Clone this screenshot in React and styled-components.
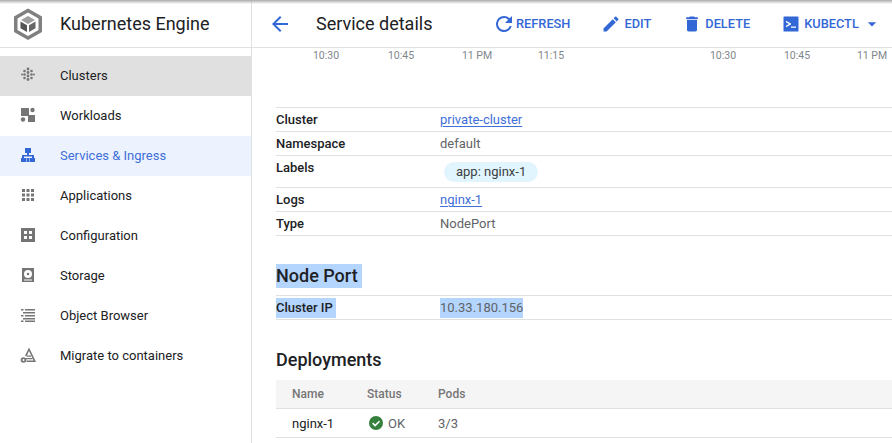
import React from "react";
import styled, { createGlobalStyle } from "styled-components";

const Global = createGlobalStyle`
  html, body {
    margin: 0;
    padding: 0;
    height: 100%;
    background: #fff;
    overflow: hidden;
  }
  body {
    font-family: Roboto, "Liberation Sans", sans-serif;
    color: #202124;
  }
`;

const Page = styled.div`
  position: relative;
  display: flex;
  width: 892px;
  height: 443px;
  overflow: hidden;
`;

const TopShade = styled.div`
  position: absolute;
  top: 0;
  left: 0;
  right: 0;
  height: 4px;
  background: linear-gradient(#aaaaaa, #ffffff00);
`;

const Sidebar = styled.aside`
  flex: 0 0 251px;
  border-right: 1px solid #e0e0e0;
`;

const Brand = styled.div`
  display: flex;
  align-items: center;
  gap: 17px;
  height: 47px;
  padding-left: 13px;
  border-bottom: 1px solid #e0e0e0;
  margin-bottom: 8px;
  font-size: 18px;
  color: #202124;
`;

const NavRow = styled.div`
  display: flex;
  align-items: center;
  height: 38px;
  padding: 0 0 2px 17px;
  gap: 21px;
  font-size: 13px;
  color: ${(p) => (p.$active ? "#3f6fd8" : "#202124")};
  background: ${(p) => (p.$active ? "#edf3fe" : p.$current ? "#e0e0e0" : "transparent")};
`;

const NavIcon = styled.svg`
  width: 22px;
  height: 22px;
  flex: none;
  fill: ${(p) => (p.$active ? "#3367d6" : "#757575")};
`;

const Main = styled.main`
  flex: 1;
  min-width: 0;
`;

const Toolbar = styled.header`
  display: flex;
  align-items: center;
  height: 47px;
  padding-left: 16px;
  border-bottom: 1px solid #e0e0e0;
`;

const BackIcon = styled.svg`
  flex: none;
  width: 24px;
  height: 24px;
  fill: #3367d6;
  margin-right: 24px;
`;

const Title = styled.h1`
  margin: 0;
  flex: 0 0 176px;
  font-size: 18px;
  font-weight: 400;
`;

const Actions = styled.div`
  display: flex;
  align-items: center;
  gap: 31px;
  flex: none;
`;

const Action = styled.div`
  display: flex;
  align-items: center;
  gap: ${(p) => p.$gap ?? 3}px;
  font-size: 12.8px;
  font-weight: 500;
  color: #3367d6;
`;

const ActionIcon = styled.svg`
  flex: none;
  width: ${(p) => p.$size || 20}px;
  height: ${(p) => p.$size || 20}px;
  fill: #3367d6;
`;

const Axis = styled.div`
  position: relative;
  height: 59px;
`;

const Tick = styled.span`
  position: absolute;
  top: 1px;
  left: ${(p) => p.$left}px;
  transform: translateX(-50%);
  white-space: nowrap;
  font-size: 10.5px;
  color: #80868b;
`;

const Content = styled.div`
  padding-left: 24px;
`;

const Rows = styled.div`
  border-top: 1px solid #e0e0e0;
`;

const Row = styled.div`
  display: flex;
  min-height: ${(p) => p.$height || 23}px;
  border-bottom: 1px solid #e0e0e0;
  font-size: 13px;
  line-height: 23px;
`;

const Key = styled.div`
  flex: 0 0 164px;
  font-weight: 500;
  color: #202124;
`;

const Value = styled.div`
  color: #5f6368;
`;

const Link = styled.a`
  color: #3f6fd8;
  text-decoration: underline;
  text-underline-offset: 2px;
`;

const Chip = styled.span`
  display: inline-block;
  vertical-align: top;
  margin: 6px 0 0 4px;
  padding: 0 12px;
  height: 20px;
  line-height: 20px;
  border-radius: 10px;
  background: #e1f5fe;
  color: #3c4043;
`;

const SectionTitle = styled.h2`
  margin: ${(p) => p.$top}px 0 ${(p) => p.$bottom}px;
  font-size: 18px;
  line-height: 24px;
  font-weight: 500;
  color: #202124;
`;

const Selected = styled.span`
  display: inline-block;
  padding-right: ${(p) => p.$pad || 0}px;
  background: #b4d5fe;
`;

const SelectedCell = styled(Selected)`
  vertical-align: top;
  margin-top: 2px;
  line-height: 20px;
`;

const TableHead = styled.div`
  display: flex;
  align-items: center;
  height: 28px;
  padding-left: 16px;
  background: #f5f5f5;
  border-bottom: 1px solid #e0e0e0;
  font-size: 12px;
  font-weight: 500;
  color: #757575;
`;

const TableRow = styled.div`
  display: flex;
  align-items: center;
  height: 28px;
  padding-left: 16px;
  border-bottom: 1px solid #e0e0e0;
  font-size: 13px;
  color: #5f6368;
`;

const Cell = styled.div`
  flex: 0 0 ${(p) => p.$width}px;
  display: flex;
  align-items: center;
  gap: 5px;
  color: ${(p) => (p.$dark ? "#202124" : "inherit")};
`;

const OkIcon = styled.svg`
  width: 14px;
  height: 14px;
  margin-left: 2px;
`;

const Hexagon = () => (
  <svg width="30" height="32" viewBox="0 0 30 32">
    <path
      fill="#808080"
      fillRule="evenodd"
      d="M15 0.5 29 8.500V24L15 32 1 24V8.500ZM15 4.500 4.500 10.500V22L15 28 25.500 22V10.500Z"
    />
    <path fill="#9e9e9e" d="M15 8 22 12 15 16 8 12Z" />
    <path fill="#555" d="M7.500 13.500 14 17.200V24L7.500 20.300Z" />
    <path fill="#666" d="M22.500 13.500V20.300L16 24V17.200Z" />
  </svg>
);

const navItems = [
  {
    label: "Clusters",
    current: true,
    icon: (
      <>
        <circle cx="11" cy="5" r="1.400" />
        <circle cx="11" cy="8.500" r="1.400" />
        <circle cx="11" cy="12" r="1.400" />
        <circle cx="11" cy="15.500" r="1.400" />
        <circle cx="7.500" cy="7" r="1.300" />
        <circle cx="14.500" cy="7" r="1.300" />
        <circle cx="7.500" cy="10.500" r="1.300" />
        <circle cx="14.500" cy="10.500" r="1.300" />
        <circle cx="7.500" cy="14" r="1.300" />
        <circle cx="14.500" cy="14" r="1.300" />
        <circle cx="5" cy="10.500" r="1" />
        <circle cx="17" cy="10.500" r="1" />
      </>
    ),
  },
  {
    label: "Workloads",
    icon: (
      <>
        <rect x="4" y="4" width="8" height="8" />
        <circle cx="15.500" cy="6" r="2.200" />
        <circle cx="6" cy="15.500" r="2.200" />
        <rect x="11" y="11" width="7" height="7" />
      </>
    ),
  },
  {
    label: "Services & Ingress",
    active: true,
    icon: (
      <path d="M8 4h6v5h-2v2h5v3h1v4h-5v-4h2v-1.500h-8V14h2v4H4v-4h1v-3h5V9H8ZM9.500 14h3v4h-3Z" />
    ),
  },
  {
    label: "Applications",
    icon: (
      <>
        {[5, 9.5, 14].map((y) =>
          [5, 9.5, 14].map((x) => <rect key={`${x}-${y}`} x={x} y={y} width="3" height="3" />)
        )}
      </>
    ),
  },
  {
    label: "Configuration",
    icon: (
      <path
        fillRule="evenodd"
        d="M4 4h14v14H4ZM7 7v3h3V7ZM12 7v3h3V7ZM7 12v3h3v-3ZM12 12v3h3v-3Z"
      />
    ),
  },
  {
    label: "Storage",
    icon: (
      <path
        fillRule="evenodd"
        d="M5 4h12v14H5ZM11 6a4 4 0 1 0 0 8 4 4 0 0 0 0-8ZM11 8.700a1.300 1.300 0 1 1 0 2.600 1.300 1.300 0 0 1 0-2.600ZM7 15.500v1h8v-1Z"
      />
    ),
  },
  {
    label: "Object Browser",
    icon: (
      <path d="M8 5h10v1.500H8ZM4 5h2.500v1.500H4ZM6 8h12v1.500H6ZM4 11h2.500v1.500H4ZM8 11h10v1.500H8ZM6 14h12v1.500H6ZM4 16.500h2.500V18H4ZM8 16.500h10V18H8Z" />
    ),
  },
  {
    label: "Migrate to containers",
    icon: (
      <>
        <path fillRule="evenodd" d="M12 3.500 19 18H9.500v-1.500h7L12 7 9.500 12.500 8 11.800Z" />
        <path d="M10 11.500h4v1.300h-4ZM9 14h6.500v1.300H9Z" />
        <circle cx="6.500" cy="16" r="2.800" />
        <circle cx="6.500" cy="16" r="1" fill="#fff" />
      </>
    ),
  },
];

const ticks = [
  ["10:30", 74],
  ["10:45", 149],
  ["11 PM", 225],
  ["11:15", 299],
  ["10:30", 471],
  ["10:45", 545],
  ["11 PM", 620],
];

const App = () => {
  return (
    <Page>
      <Global />
      <TopShade />
      <Sidebar>
        <Brand>
          <Hexagon />
          Kubernetes Engine
        </Brand>
        {navItems.map((item) => (
          <NavRow key={item.label} $active={item.active} $current={item.current}>
            <NavIcon viewBox="0 0 22 22" $active={item.active}>
              {item.icon}
            </NavIcon>
            {item.label}
          </NavRow>
        ))}
      </Sidebar>
      <Main>
        <Toolbar>
          <BackIcon viewBox="0 0 24 24">
            <path d="M20 11H7.830l5.590-5.590L12 4l-8 8 8 8 1.410-1.410L7.830 13H20z" />
          </BackIcon>
          <Title>Service details</Title>
          <Actions>
            <Action $gap={0}>
              <ActionIcon viewBox="0 0 24 24" $size={24}>
                <path d="M17.650 6.350A7.950 7.950 0 0 0 12 4a8 8 0 1 0 7.740 10h-2.080A6 6 0 1 1 12 6c1.660 0 3.140.69 4.220 1.780L13 11h7V4z" />
              </ActionIcon>
              REFRESH
            </Action>
            <Action>
              <ActionIcon viewBox="0 0 24 24">
                <path d="M3 17.250V21h3.750L17.810 9.940l-3.750-3.750zM20.710 7.040a1 1 0 0 0 0-1.410l-2.340-2.340a1 1 0 0 0-1.410 0l-1.830 1.830 3.750 3.750z" />
              </ActionIcon>
              EDIT
            </Action>
            <Action>
              <ActionIcon viewBox="0 0 24 24">
                <path d="M6 19c0 1.100.9 2 2 2h8c1.100 0 2-.9 2-2V7H6zM19 4h-3.500l-1-1h-5l-1 1H5v2h14z" />
              </ActionIcon>
              DELETE
            </Action>
            <Action>
              <ActionIcon viewBox="0 0 24 24">
                <path
                  fillRule="evenodd"
                  d="M4 3h16a1 1 0 0 1 1 1v16a1 1 0 0 1-1 1H4a1 1 0 0 1-1-1V4a1 1 0 0 1 1-1ZM6 8v2l3.500 2L6 14v2l6-3.300v-1.400ZM12 15v1.500h6V15Z"
                />
              </ActionIcon>
              KUBECTL
              <ActionIcon viewBox="0 0 24 24">
                <path d="M7 10l5 5 5-5z" />
              </ActionIcon>
            </Action>
          </Actions>
        </Toolbar>
        <Axis>
          {ticks.map(([label, left]) => (
            <Tick key={`${label}-${left}`} $left={left}>
              {label}
            </Tick>
          ))}
        </Axis>
        <Content>
          <Rows>
            <Row>
              <Key>Cluster</Key>
              <Value>
                <Link>private-cluster</Link>
              </Value>
            </Row>
            <Row>
              <Key>Namespace</Key>
              <Value>default</Value>
            </Row>
            <Row $height={31}>
              <Key>Labels</Key>
              <Value>
                <Chip>app: nginx-1</Chip>
              </Value>
            </Row>
            <Row>
              <Key>Logs</Key>
              <Value>
                <Link>nginx-1</Link>
              </Value>
            </Row>
            <Row>
              <Key>Type</Key>
              <Value>NodePort</Value>
            </Row>
          </Rows>
          <SectionTitle $top={28} $bottom={7}>
            <Selected $pad={4}>Node Port</Selected>
          </SectionTitle>
          <Rows>
            <Row>
              <Key>
                <SelectedCell $pad={3}>Cluster IP</SelectedCell>
              </Key>
              <Value>
                <SelectedCell>10.33.180.156</SelectedCell>
              </Value>
            </Row>
          </Rows>
          <SectionTitle $top={28} $bottom={8}>
            Deployments
          </SectionTitle>
          <TableHead>
            <Cell $width={75}>Name</Cell>
            <Cell $width={71}>Status</Cell>
            <Cell $width={60}>Pods</Cell>
          </TableHead>
          <TableRow>
            <Cell $width={75} $dark>
              nginx-1
            </Cell>
            <Cell $width={71}>
              <OkIcon viewBox="0 0 16 16">
                <circle cx="8" cy="8" r="8" fill="#34803c" />
                <path d="M4.200 8.200 7 11l5-5" stroke="#fff" strokeWidth="1.800" fill="none" />
              </OkIcon>
              OK
            </Cell>
            <Cell $width={60}>3/3</Cell>
          </TableRow>
        </Content>
      </Main>
    </Page>
  );
};

export default App;
